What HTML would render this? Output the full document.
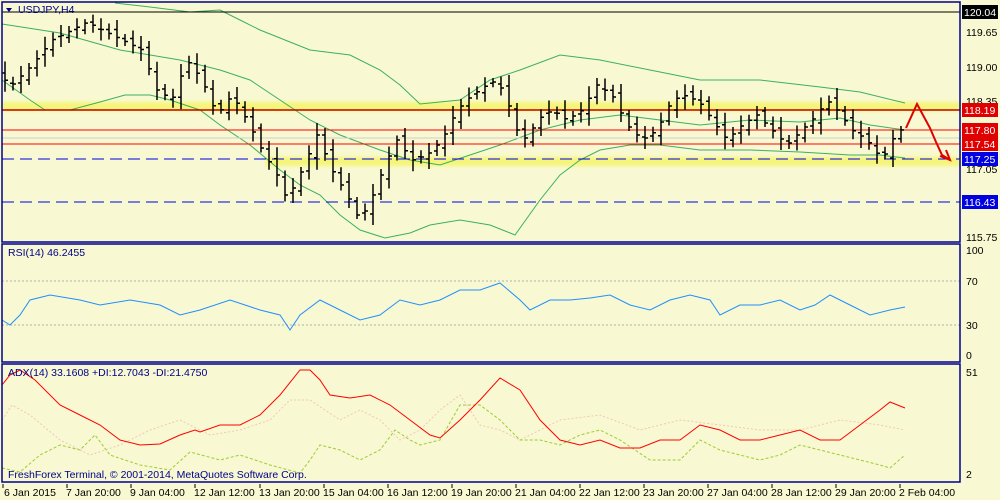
<!DOCTYPE html>
<html><head><meta charset="utf-8"><style>
html,body{margin:0;padding:0;background:#f8f8d2;}
svg{display:block;font-family:"Liberation Sans",sans-serif;}
</style></head><body>
<svg id="s" width="1000" height="500" viewBox="0 0 1000 500" xmlns="http://www.w3.org/2000/svg">
<rect x="0" y="0" width="1000" height="500" fill="#f8f8d2"/>
<defs><filter id="b" x="-5%" y="-100%" width="110%" height="300%"><feGaussianBlur stdDeviation="1.5"/></filter></defs>
<!-- highlight bands -->
<rect x="2" y="102" width="958" height="9" fill="#f5f57a" filter="url(#b)"/>
<rect x="266" y="157" width="694" height="9" fill="#f5f57a" filter="url(#b)"/>
<!-- bollinger -->
<g fill="none" stroke="#3cb060" stroke-width="1">
<polyline points="115,3 150,7 190,12 220,10 240,20 260,30 310,50 350,55 380,70 400,85 420,104 460,100 490,80 520,70 560,55 600,60 650,70 700,80 760,80 820,87 860,92 905,103"/>
<polyline points="2,24 60,33 120,50 180,60 220,70 250,80 280,100 310,120 340,135 380,150 410,160 440,165 470,155 500,145 540,130 580,120 620,115 660,120 700,125 750,120 800,122 840,118 870,125 905,130"/>
<polyline points="2,80 30,100 45,110 70,110 100,102 125,95 150,95 170,100 200,110 220,125 250,145 280,170 300,185 320,195 340,215 360,230 385,238 410,233 430,225 460,220 490,225 515,235 540,200 560,175 580,160 600,150 630,145 660,145 700,150 750,150 800,152 850,155 880,155 905,158"/>
</g>
<!-- levels -->
<line x1="2" y1="12" x2="960" y2="12" stroke="#000"/>
<line x1="2" y1="138" x2="960" y2="138" stroke="#d0d0c8"/>
<line x1="2" y1="110" x2="960" y2="110" stroke="#c00000" stroke-width="1.5"/>
<line x1="2" y1="130" x2="960" y2="130" stroke="#ff0000"/>
<line x1="2" y1="144" x2="960" y2="144" stroke="#ff0000"/>
<line x1="2" y1="159" x2="960" y2="159" stroke="#0000e0" stroke-dasharray="12,6"/>
<line x1="2" y1="202" x2="960" y2="202" stroke="#0000e0" stroke-dasharray="12,6"/>
<g id="bars" stroke="#000" stroke-width="1.5" fill="none"></g>
<!-- arrow -->
<polyline points="906,128 917,104 930,128 936,142 942,155 950,160" fill="none" stroke="#e00000" stroke-width="2"/>
<polyline points="940,156 950,160 946,150" fill="none" stroke="#e00000" stroke-width="2"/>
<!-- RSI -->
<line x1="2" y1="281" x2="960" y2="281" stroke="#b0b0b0" stroke-dasharray="2,2"/>
<line x1="2" y1="325" x2="960" y2="325" stroke="#b0b0b0" stroke-dasharray="2,2"/>
<polyline fill="none" stroke="#1e90ff" points="2,320 10,325 20,315 30,300 50,295 80,300 100,305 130,300 160,305 180,315 200,310 230,300 260,310 280,315 290,330 300,315 320,300 340,310 360,320 380,315 400,300 420,305 440,300 460,290 480,290 500,283 520,300 530,310 550,300 570,300 590,298 610,295 630,305 650,310 670,300 690,295 710,300 720,315 740,305 760,305 780,300 800,310 815,305 830,295 850,305 870,315 890,310 905,307"/>
<!-- ADX -->
<polyline fill="none" stroke="#f0c8b8" stroke-dasharray="2,2" points="2,420 12,405 30,415 60,440 90,455 120,445 150,430 180,420 210,435 240,430 270,420 290,400 310,400 340,420 360,410 380,420 400,440 420,430 440,410 460,395 480,425 500,430 520,440 540,430 560,420 600,415 640,430 680,420 720,425 760,430 800,430 840,420 880,425 905,430"/>
<polyline fill="none" stroke="#9acd32" stroke-dasharray="3,2" points="2,468 20,472 40,455 60,445 80,450 95,435 110,455 140,465 170,470 190,452 220,460 240,455 270,465 300,473 310,460 320,445 340,450 360,460 380,450 395,430 410,440 420,445 440,440 460,405 480,405 500,420 520,440 540,440 560,445 580,435 600,430 620,440 650,460 680,460 700,440 720,450 740,455 760,460 780,455 800,445 820,450 840,455 860,460 880,465 890,468 905,455"/>
<polyline fill="none" stroke="#ff0000" points="2,385 10,375 20,370 35,380 60,405 80,415 100,425 120,440 140,445 160,444 180,435 195,430 200,432 220,425 240,425 260,415 280,395 300,370 310,370 320,380 330,395 350,398 370,395 390,405 410,420 430,435 440,438 460,420 480,400 500,378 520,390 540,420 560,440 580,445 600,440 620,448 640,448 660,440 680,440 700,425 720,430 740,440 760,440 780,435 800,430 820,440 840,440 860,425 880,410 890,402 905,408"/>
<!-- frames -->
<g fill="none" stroke="#00008b" stroke-width="1.5">
<rect x="2" y="2" width="958" height="240"/>
<rect x="2" y="244" width="958" height="118"/>
<rect x="2" y="364" width="958" height="118"/>
</g>
<!-- text -->
<g font-size="10.5" fill="#000">
<path d="M6,8 L12,8 L9,12 Z" fill="#00008b"/>
<text x="18" y="13" fill="#00008b">USDJPY,H4</text>
<text x="8" y="256" fill="#00008b">RSI(14) 46.2455</text>
<text x="8" y="376" fill="#00008b">ADX(14) 33.1608 +DI:12.7043 -DI:21.4750</text>
<text x="8" y="478" fill="#00008b">FreshForex Terminal, © 2001-2014, MetaQuotes Software Corp.</text>
<text x="966" y="36">119.65</text>
<text x="966" y="71">119.00</text>
<text x="966" y="105">118.35</text>
<text x="966" y="173">117.05</text>
<text x="966" y="241">115.75</text>
<text x="966" y="254">100</text>
<text x="966" y="285">70</text>
<text x="966" y="329">30</text>
<text x="966" y="359">0</text>
<text x="966" y="376">51</text>
<text x="966" y="478">2</text>
</g>
<g font-size="10.5" fill="#fff">
<rect x="962" y="5" width="36" height="14" fill="#000"/><text x="964" y="16">120.04</text>
<rect x="962" y="103" width="36" height="14" fill="#e00000"/><text x="964" y="114">118.19</text>
<rect x="962" y="123" width="36" height="14" fill="#e00000"/><text x="964" y="134">117.80</text>
<rect x="962" y="137" width="36" height="14" fill="#e00000"/><text x="964" y="148">117.54</text>
<rect x="962" y="152" width="36" height="14" fill="#0000e0"/><text x="964" y="163">117.25</text>
<rect x="962" y="195" width="36" height="14" fill="#0000e0"/><text x="964" y="206">116.43</text>
</g>
<g font-size="10.5" fill="#000">
<text x="4" y="496">6 Jan 2015</text>
<text x="66" y="496">7 Jan 20:00</text>
<text x="130" y="496">9 Jan 04:00</text>
<text x="194" y="496">12 Jan 12:00</text>
<text x="259" y="496">13 Jan 20:00</text>
<text x="323" y="496">15 Jan 04:00</text>
<text x="387" y="496">16 Jan 12:00</text>
<text x="451" y="496">19 Jan 20:00</text>
<text x="515" y="496">21 Jan 04:00</text>
<text x="579" y="496">22 Jan 12:00</text>
<text x="643" y="496">23 Jan 20:00</text>
<text x="707" y="496">27 Jan 04:00</text>
<text x="771" y="496">28 Jan 12:00</text>
<text x="835" y="496">29 Jan 20:00</text>
<text x="899" y="496">2 Feb 04:00</text>
</g>
<g stroke="#000">
<line x1="3" y1="484" x2="3" y2="488"/><line x1="67" y1="484" x2="67" y2="488"/><line x1="131" y1="484" x2="131" y2="488"/><line x1="195" y1="484" x2="195" y2="488"/><line x1="260" y1="484" x2="260" y2="488"/><line x1="324" y1="484" x2="324" y2="488"/><line x1="388" y1="484" x2="388" y2="488"/><line x1="452" y1="484" x2="452" y2="488"/><line x1="516" y1="484" x2="516" y2="488"/><line x1="580" y1="484" x2="580" y2="488"/><line x1="644" y1="484" x2="644" y2="488"/><line x1="708" y1="484" x2="708" y2="488"/><line x1="772" y1="484" x2="772" y2="488"/><line x1="836" y1="484" x2="836" y2="488"/><line x1="900" y1="484" x2="900" y2="488"/>
</g>
</svg>
<script>
var P=[[5,75],[20,85],[40,65],[60,40],[80,30],[95,22],[110,30],[130,40],[150,50],[165,90],[180,100],[195,60],[210,80],[225,115],[240,95],[255,120],[270,150],[285,175],[295,200],[310,170],[325,135],[340,170],[355,195],[365,215],[375,210],[385,185],[395,160],[405,140],[420,160],[435,155],[450,140],[465,110],[480,95],[495,85],[505,80],[515,100],[525,130],[535,140],[545,120],[560,110],[575,120],[590,110],[605,85],[620,95],[635,125],[650,140],[665,130],[680,100],[695,95],[710,105],[720,120],[735,140],[750,125],[765,115],[780,130],[795,145],[810,130],[825,115],[835,100],[845,110],[860,130],[875,140],[890,160],[900,140],[908,130]];
function f(x){for(var i=0;i<P.length-1;i++){if(x<=P[i+1][0]){var t=(x-P[i][0])/(P[i+1][0]-P[i][0]);return P[i][1]+t*(P[i+1][1]-P[i][1]);}}return P[P.length-1][1];}
var d="",s=7;
for(var x=5;x<=908;x+=8){var m=f(x),n=f(x+8),h=8+((x*37)%17);var o=m+((x*13)%9-4),c=n;
var t=Math.min(o,c)-h/2,b=Math.max(o,c)+h/2;
d+="M"+x+" "+t.toFixed(1)+"V"+b.toFixed(1)+"M"+(x-3)+" "+o.toFixed(1)+"H"+x+"M"+x+" "+c.toFixed(1)+"H"+(x+3);}
var p=document.createElementNS("http://www.w3.org/2000/svg","path");p.setAttribute("d",d);document.getElementById("bars").appendChild(p);
</script>
</body></html>
